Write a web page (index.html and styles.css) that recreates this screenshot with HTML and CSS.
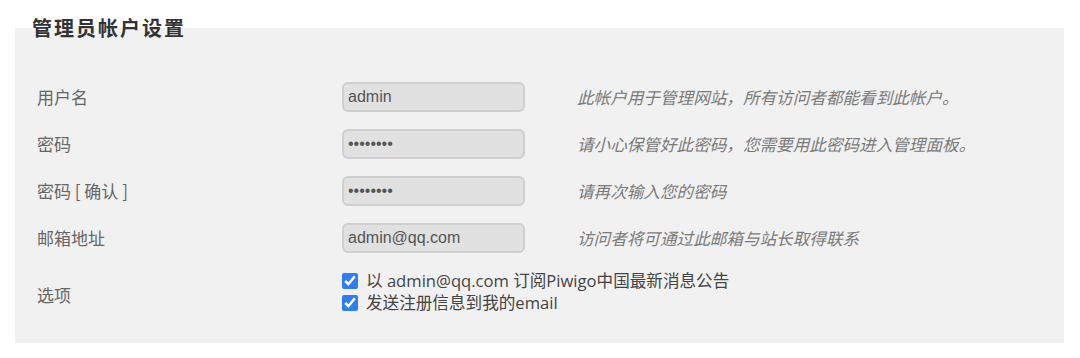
FILE: index.html
```html
<!DOCTYPE html>
<html lang="zh-CN">
<head>
<meta charset="utf-8">
<title>管理员帐户设置</title>
<link rel="stylesheet" href="styles.css">
</head>
<body>
<fieldset class="panel">
  <legend class="panel-title">管理员帐户设置</legend>
  <div class="form">
    <label class="label" for="username">用户名</label>
    <input class="field" id="username" type="text" value="admin">
    <span class="hint">此帐户用于管理网站，所有访问者都能看到此帐户。</span>

    <label class="label" for="pw">密码</label>
    <input class="field" id="pw" type="password" value="password">
    <span class="hint">请小心保管好此密码，您需要用此密码进入管理面板。</span>

    <label class="label" for="pw2">密码 [ 确认 ]</label>
    <input class="field" id="pw2" type="password" value="password">
    <span class="hint">请再次输入您的密码</span>

    <label class="label" for="mail">邮箱地址</label>
    <input class="field" id="mail" type="text" value="admin@qq.com">
    <span class="hint">访问者将可通过此邮箱与站长取得联系</span>

    <span class="label label-options">选项</span>
    <div class="options">
      <label class="option"><input class="check" type="checkbox" checked>以 admin@qq.com 订阅Piwigo中国最新消息公告</label>
      <label class="option"><input class="check" type="checkbox" checked>发送注册信息到我的email</label>
    </div>
  </div>
</fieldset>
</body>
</html>
```
FILE: styles.css
```css
html, body {
  margin: 0;
  padding: 0;
  background: #ffffff;
}

body {
  width: 1080px;
  height: 358px;
  overflow: hidden;
  font-family: "Noto Sans CJK SC", "Liberation Sans", sans-serif;
}

.panel {
  box-sizing: border-box;
  width: 1049px;
  margin: 16px 0 0 15px;
  padding: 0;
  border: none;
  background: #f1f1f1;
  min-inline-size: 0;
}

.panel-title {
  margin-left: 17px;
  padding: 0;
  font-size: 20px;
  line-height: 24px;
  font-weight: bold;
  letter-spacing: 2px;
  color: #333333;
}

.form {
  display: grid;
  grid-template-columns: 305px 235px 1fr;
  row-gap: 17px;
  align-items: center;
  padding: 42px 0 29px 22px;
}

.label {
  font-size: 17px;
  line-height: 24px;
  color: #666666;
}

.label-options {
  padding-top: 6px;
}

.field {
  box-sizing: border-box;
  width: 183px;
  height: 30px;
  margin: 0;
  padding: 0 4px;
  border: 2px solid #cfcfcf;
  border-radius: 6px;
  background: #e1e1e1;
  font-family: "Liberation Sans", Arial, sans-serif;
  font-size: 16px;
  color: #555555;
  outline: none;
}

.hint {
  font-size: 16.6px;
  line-height: 24px;
  font-style: italic;
  color: #7a7a7a;
}

.options {
  grid-column: 2 / span 2;
  display: flex;
  flex-direction: column;
}

.option {
  display: flex;
  align-items: center;
  white-space: nowrap;
  font-family: "Open Sans", "Noto Sans CJK SC", sans-serif;
  font-size: 16.6px;
  line-height: 22px;
  color: #444444;
}

.check {
  flex: none;
  width: 16px;
  height: 16px;
  margin: 0 8px 0 0;
  accent-color: #2f7cf6;
}
```
